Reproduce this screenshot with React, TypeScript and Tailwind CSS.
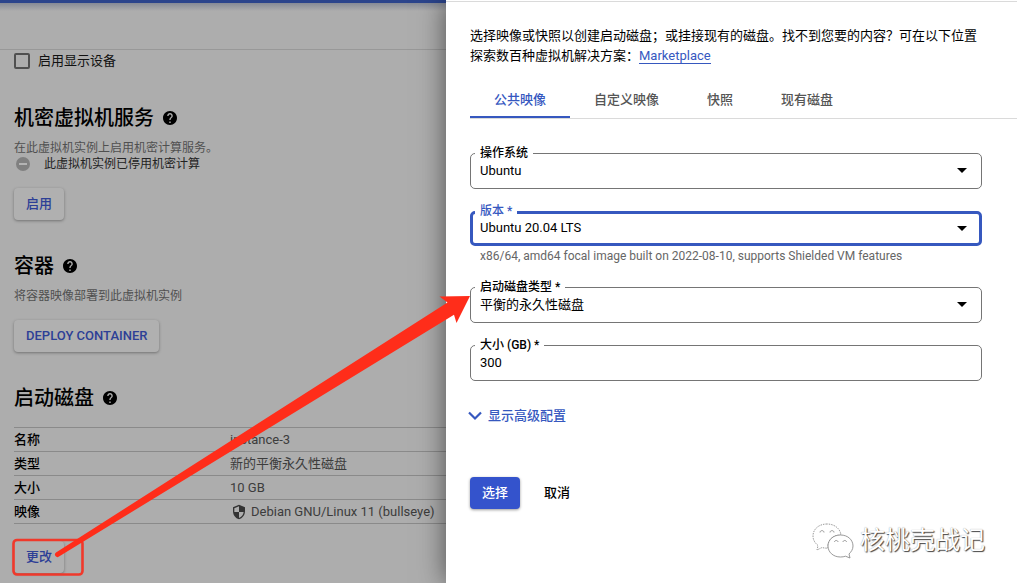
import { useState } from "react";
import type { ReactNode } from "react";

const TABS = ["公共映像", "自定义映像", "快照", "现有磁盘"];

const DISK_ROWS = [
  { label: "名称", value: "instance-3" },
  { label: "类型", value: "新的平衡永久性磁盘" },
  { label: "大小", value: "10 GB" },
  { label: "映像", value: "Debian GNU/Linux 11 (bullseye)", shield: true },
];

function HelpIcon() {
  return (
    <svg viewBox="2 2 20 20" className="h-3.5 w-3.5" aria-hidden="true">
      <path d="M12 2C6.48 2 2 6.48 2 12s4.48 10 10 10 10-4.48 10-10S17.52 2 12 2zm1 17h-2v-2h2v2zm2.07-7.75-.9.92C13.45 12.9 13 13.5 13 15h-2v-.5c0-1.1.45-2.1 1.17-2.83l1.24-1.26c.37-.36.59-.86.59-1.41 0-1.1-.9-2-2-2s-2 .9-2 2H8c0-2.21 1.79-4 4-4s4 1.79 4 4c0 .88-.36 1.68-.93 2.25z" />
    </svg>
  );
}

function ShieldIcon() {
  return (
    <svg viewBox="0 0 24 24" className="h-4 w-4 fill-[#333]" aria-hidden="true">
      <path d="M12 1 3 5v6c0 5.55 3.84 10.74 9 12 5.16-1.26 9-6.45 9-12V5l-9-4zm0 10.99h7c-.53 4.12-3.28 7.79-7 8.94V12H5V6.3l7-3.11v8.8z" />
    </svg>
  );
}

function SectionTitle({ children }: { children: ReactNode }) {
  return (
    <h2 className="flex items-center gap-2 text-xl leading-7 font-medium text-black">
      {children}
      <span className="grid h-4 w-4 place-items-center">
        <HelpIcon />
      </span>
    </h2>
  );
}

function RaisedButton({ children }: { children: ReactNode }) {
  return (
    <button
      type="button"
      className="h-8 rounded-sm bg-[#b0b0b0] px-3 text-[13px] font-medium text-[#2d3f96] shadow-[0_1px_3px_rgba(0,0,0,0.35)]"
    >
      {children}
    </button>
  );
}

type FieldProps = {
  id: string;
  label: string;
  focused?: boolean;
  children: ReactNode;
};

/** Outlined box with its label sitting in the top border. */
function Field({ id, label, focused, children }: FieldProps) {
  return (
    <div
      className={
        focused
          ? "relative h-[35px] rounded-[5px] border-3 border-[#3658bf]"
          : "relative h-9 rounded-[5px] border border-[#757575]"
      }
    >
      {children}
      <label
        htmlFor={id}
        className={
          focused
            ? "absolute -top-[11px] left-0.5 bg-white px-[5px] text-xs leading-4 font-medium text-[#3658bf]"
            : "absolute -top-[9px] left-1 bg-white px-[5px] text-xs leading-4 font-medium text-black"
        }
      >
        {label}
      </label>
    </div>
  );
}

function SelectField({ id, label, focused, option }: Omit<FieldProps, "children"> & { option: string }) {
  return (
    <Field id={id} label={label} focused={focused}>
      <select
        id={id}
        className={
          focused
            ? "block h-full w-full appearance-none bg-transparent px-[7px] pb-px text-[13px] outline-none"
            : "block h-full w-full appearance-none bg-transparent px-[9px] pb-px text-[13px] outline-none"
        }
      >
        <option>{option}</option>
      </select>
      <svg
        viewBox="0 0 10 5"
        className={
          focused
            ? "pointer-events-none absolute top-3 right-3 h-[5px] w-2.5"
            : "pointer-events-none absolute top-3.5 right-3.5 h-[5px] w-2.5"
        }
        aria-hidden="true"
      >
        <path d="M0 0h10L5 5z" />
      </svg>
    </Field>
  );
}

function InstancePage() {
  return (
    <main className="w-[446px] shrink-0 overflow-hidden bg-[#adadad] text-[13px] text-[#3c3c3c]">
      <div className="h-[50px] border-t-3 border-b border-t-[#2b448c] border-b-[#989898]">
        <div className="h-2 bg-linear-to-b from-[#868a96] to-[#adadad]" />
      </div>

      <div className="pt-[3px] pl-3.5">
        <label className="flex h-4 items-center gap-2 text-[#111]">
          <input type="checkbox" className="h-4 w-4 appearance-none rounded-xs border-2 border-[#505050]" />
          启用显示设备
        </label>

        <section className="mt-[35px]">
          <SectionTitle>机密虚拟机服务</SectionTitle>
          <p className="mt-2 text-xs leading-4 text-[#505050]">在此虚拟机实例上启用机密计算服务。</p>
          <p className="flex items-center gap-3.5 pl-0.5 text-xs leading-4 text-[#222]">
            <svg viewBox="0 0 14 14" className="h-3.5 w-3.5" aria-hidden="true">
              <circle cx="7" cy="7" r="7" fill="#808080" />
              <path d="M3 6h8v2H3z" fill="#b4b4b4" />
            </svg>
            此虚拟机实例已停用机密计算
          </p>
          <div className="mt-4 flex">
            <RaisedButton>启用</RaisedButton>
          </div>
        </section>

        <section className="mt-8">
          <SectionTitle>容器</SectionTitle>
          <p className="mt-2 text-xs leading-4 text-[#505050]">将容器映像部署到此虚拟机实例</p>
          <div className="mt-4 flex">
            <RaisedButton>DEPLOY CONTAINER</RaisedButton>
          </div>
        </section>

        <section className="mt-8">
          <SectionTitle>启动磁盘</SectionTitle>
          <table className="mt-[15px] w-full border-t border-[#8a8a8a] text-left">
            <tbody>
              {DISK_ROWS.map((row) => (
                <tr key={row.label} className="h-6 border-b border-[#8a8a8a]">
                  <th className="w-1/2 p-0 font-medium text-black">{row.label}</th>
                  <td className="p-0">
                    {row.shield ? (
                      <span className="flex items-center gap-1 pl-px whitespace-nowrap">
                        <ShieldIcon />
                        {row.value}
                      </span>
                    ) : (
                      row.value
                    )}
                  </td>
                </tr>
              ))}
            </tbody>
          </table>
          <div className="mt-[17px] flex">
            <RaisedButton>更改</RaisedButton>
          </div>
        </section>
      </div>
    </main>
  );
}

function BootDiskDrawer() {
  const [tab, setTab] = useState(TABS[0]);

  return (
    <aside className="relative flex-1 bg-white pt-px text-[13px] text-black shadow-[0_0_26px_rgba(0,0,0,0.55)]">
      <div className="border-t border-[#dadada] pt-6 pl-6">
        <p className="pr-9 leading-5">
          选择映像或快照以创建启动磁盘；或挂接现有的磁盘。找不到您要的内容？可在以下位置探索数百种虚拟机解决方案：
          <a href="#marketplace" className="border-b border-[#3658bf] text-[#3658bf]">
            Marketplace
          </a>
        </p>

        <div role="tablist" className="mt-4 flex border-b border-[#dadada]">
          {TABS.map((name) => (
            <button
              key={name}
              type="button"
              role="tab"
              aria-selected={name === tab}
              onClick={() => setTab(name)}
              className={
                name === tab
                  ? "h-9 border-b-2 border-[#3658bf] px-6 pt-0.5 font-medium text-[#3658bf]"
                  : "h-9 border-b-2 border-transparent px-6 pt-0.5 font-medium text-[#555]"
              }
            >
              {name}
            </button>
          ))}
        </div>

        <form className="mt-[34px] mr-[35px]">
          <div className="flex flex-col gap-[22px]">
            <SelectField id="os" label="操作系统" option="Ubuntu" />
            <div>
              <SelectField id="version" label="版本 *" option="Ubuntu 20.04 LTS" focused />
              <p className="px-2.5 pt-0.5 text-xs leading-[17px] text-[#666]">
                x86/64, amd64 focal image built on 2022-08-10, supports Shielded VM features
              </p>
            </div>
            <SelectField id="disk-type" label="启动磁盘类型 *" option="平衡的永久性磁盘" />
            <Field id="size" label="大小 (GB) *">
              <input
                id="size"
                defaultValue="300"
                className="block h-full w-full bg-transparent px-[9px] pb-0.5 text-[13px] outline-none"
              />
            </Field>
          </div>

          <button type="button" className="mt-[25px] flex h-5 items-center font-medium text-[#3658bf]">
            <svg viewBox="0 0 18 12" className="-ml-1 h-3 w-[18px]" fill="none" stroke="currentColor" strokeWidth="2.2" aria-hidden="true">
              <path d="m3 2.5 6 6 6-6" />
            </svg>
            <span className="pl-1">显示高级配置</span>
          </button>

          <div className="mt-[51px] flex gap-3">
            <button
              type="button"
              className="h-8 rounded-sm bg-[#3453cc] px-3 font-medium text-white shadow-[0_1px_3px_rgba(0,0,0,0.4)]"
            >
              选择
            </button>
            <button type="button" className="h-8 px-3 font-medium">
              取消
            </button>
          </div>
        </form>
      </div>

      <div className="absolute right-8 bottom-6 flex items-center gap-1.5 text-[25px] leading-8 text-white [text-shadow:1px_1px_1px_#444,0_0_1px_#999]">
        <svg viewBox="0 0 42 36" className="h-9 w-[42px]" fill="#fff" stroke="#808080" strokeWidth="0.8" aria-hidden="true">
          <path d="M15 1C7 1 1 6 1 13c0 4 2 7 5 9.500L5 27l5-2.500c2 .5 4 .8 6 .6C15 17 21 12 29 12 28 5 22 1 15 1z" strokeDasharray="1.500 1" />
          <path d="M28.500 12C21 12 16 17 16 23s5 11 12.500 11c2 0 3.500-.3 5-.8L38 35l-1-4c2-2 4-4.500 4-8 0-6-5-11-12.500-11z" />
          <path d="M8 9.500c0-2.500 4-2.500 4 0M18 9.500c0-2.500 4-2.500 4 0M22.500 19c0-2 3.500-2 3.500 0M31 19c0-2 3.500-2 3.500 0" />
        </svg>
        核桃壳战记
      </div>
    </aside>
  );
}

/** Red box round the change button and the arrow to the disk type field. */
function Annotation() {
  return (
    <svg
      viewBox="0 0 480 583"
      className="pointer-events-none absolute top-0 left-0 h-[583px] w-[480px]"
      aria-hidden="true"
    >
      <rect x="13.500" y="540" width="69" height="34.500" rx="3.500" fill="none" stroke="#f0392b" strokeWidth="2.600" />
      <path d="M56 552.500 447.500 302.500 439.500 296.500 470 296 456.500 323 454 314.700 59 556.500a2.500 2.500 0 0 1-3-4z" fill="#ff2d1a" />
    </svg>
  );
}

export default function App() {
  return (
    <div
      lang="zh-CN"
      className="relative flex min-h-screen overflow-hidden font-[Roboto,'Noto_Sans_CJK_SC',sans-serif]"
    >
      <InstancePage />
      <BootDiskDrawer />
      <Annotation />
    </div>
  );
}
